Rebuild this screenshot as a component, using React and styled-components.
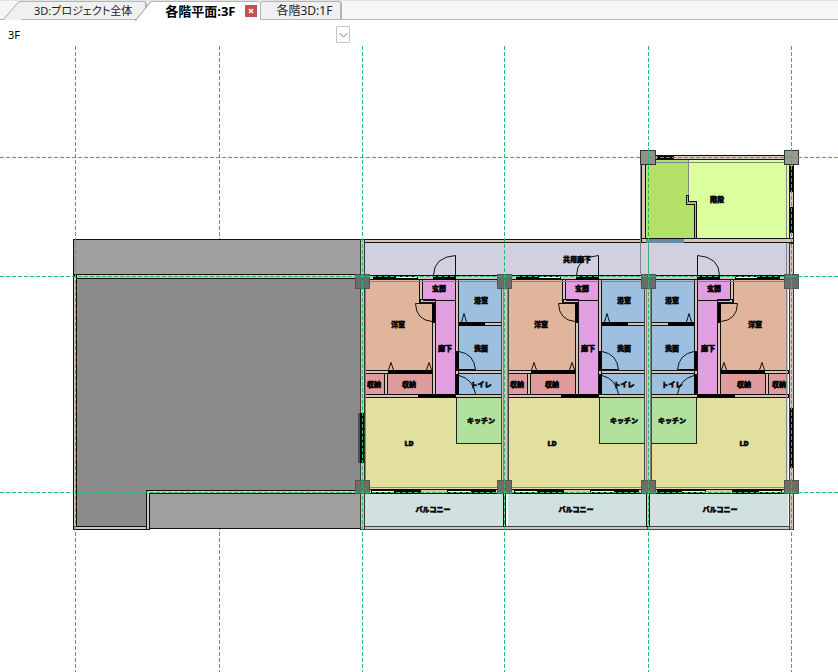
import React, { useState } from "react";
import styled, { createGlobalStyle } from "styled-components";

const GlobalStyle = createGlobalStyle`
  * {
    box-sizing: border-box;
  }
  body {
    margin: 0;
    background: #fff;
    font-family: "Noto Sans", "Noto Sans CJK JP", sans-serif;
    font-size: 12px;
    color: #000;
  }
`;

const Page = styled.div`
  display: flex;
  flex-direction: column;
  min-height: 100vh;
`;

const TabBar = styled.nav`
  display: flex;
  align-items: stretch;
  height: 20px;
  padding: 0 0 0 3px;
  background: #f6f6f6;
  border-bottom: 1px solid #b4b4b4;
  border-top: 1px solid #e2e2e2;
`;

const Tab = styled.div`
  display: flex;
  position: relative;
  margin-left: ${props => (props.$overlap ? "-12px" : "0")};
  margin-bottom: ${props => (props.$active ? "-1px" : "0")};
  z-index: ${props => (props.$active ? 1 : 0)};
`;

const TabSlant = styled.svg`
  display: block;
  flex: none;
`;

const TabBody = styled.div`
  display: flex;
  align-items: center;
  gap: 10px;
  padding: ${props => props.$pad || "0 8px 0 15px"};
  background: ${props => (props.$active ? "#fff" : "#f0f0f0")};
  border-top: 1px solid #b4b4b4;
  border-right: ${props => (props.$active ? "0" : "2px solid #b4b4b4")};
  border-left: ${props => (props.$slanted ? "0" : "1px solid #b4b4b4")};
  border-radius: ${props => (props.$slanted ? "0 3px 0 0" : "3px 3px 0 0")};
`;

const TabButton = styled.button`
  padding: 0;
  border: 0;
  background: transparent;
  font-family: inherit;
  font-size: ${props => props.$size || "12px"};
  font-weight: ${props => (props.$active ? 700 : 400)};
  font-feature-settings: "palt";
  line-height: 16px;
  color: ${props => (props.$active ? "#000" : "#222")};
  white-space: nowrap;
`;

const CloseButton = styled.button`
  display: flex;
  align-items: center;
  justify-content: center;
  width: 12px;
  height: 12px;
  padding: 0;
  border: 0;
  background: #c75050;
`;

const FloorBar = styled.div`
  padding: 6px 0 3px;
`;

const FloorField = styled.div`
  position: relative;
  width: 350px;
  height: 17px;
`;

const FloorSelect = styled.select`
  appearance: none;
  width: 100%;
  height: 17px;
  padding: 0 24px 0 8px;
  border: 0;
  background: transparent;
  font-family: inherit;
  font-size: 11px;
  line-height: 17px;
  color: #000;
`;

const FloorArrow = styled.span`
  position: absolute;
  top: 0;
  right: 0;
  display: flex;
  align-items: center;
  justify-content: center;
  width: 14px;
  height: 17px;
  border: 1px solid #c4c4c4;
  border-radius: 1px;
  background: #fff;
  pointer-events: none;
`;

const Canvas = styled.main`
  flex: 1;
`;

const Plan = styled.svg`
  display: block;
  width: 100%;
  height: auto;
`;

const Wall = styled.rect`
  fill: #d3c5ba;
  stroke: ${props => props.$edge || "#111"};
  stroke-width: 1px;
`;

const Opening = styled.rect`
  fill: #000;
`;

const Pane = styled.rect`
  fill: #fff;
`;

const Column = styled.rect`
  fill: ${props => props.$tone || "#6a6b6c"};
  stroke: ${props => props.$edge || "#555"};
  stroke-width: 1px;
`;

const Guide = styled.path`
  fill: none;
  stroke: #858585;
  stroke-width: 1px;
`;

const Swing = styled.path`
  fill: none;
  stroke: #111;
  stroke-width: 1px;
  shape-rendering: auto;
`;

const GridLine = styled.line`
  stroke: #1fc068;
  stroke-width: 1px;
  stroke-dasharray: 4 2;
`;

const RoomLabel = styled.text`
  font-size: 7px;
  font-weight: 900;
  text-anchor: middle;
  fill: #000;
  stroke: #000;
  stroke-width: 0.5px;
`;

const MIRROR = 1153;

const rooms = [
  { x: 365, y: 280, w: 68, h: 91, fill: "#e1b49c" },
  { x: 422, y: 280, w: 34, h: 21, fill: "#e19fe1" },
  { x: 435, y: 300, w: 21, h: 95, fill: "#e19fe1" },
  { x: 458, y: 280, w: 44, h: 43, fill: "#9dbfe0" },
  { x: 458, y: 326, w: 44, h: 45, fill: "#9dbfe0" },
  { x: 458, y: 374, w: 44, h: 21, fill: "#9dbfe0" },
  { x: 365, y: 374, w: 20, h: 21, fill: "#e09c9d" },
  { x: 388, y: 374, w: 45, h: 21, fill: "#e09c9d" },
  { x: 365, y: 398, w: 137, h: 91, fill: "#e1e19d" },
  { x: 365, y: 494, w: 140, h: 33, fill: "#d1e1e1" }
];

const labels = [
  { text: "玄関", x: 439, y: 291 },
  { text: "浴室", x: 481, y: 303 },
  { text: "洋室", x: 398, y: 327 },
  { text: "洗面", x: 481, y: 351 },
  { text: "廊下", x: 445, y: 351 },
  { text: "収納", x: 374, y: 387 },
  { text: "収納", x: 409, y: 387 },
  { text: "トイレ", x: 481, y: 387 },
  { text: "キッチン", x: 481, y: 423 },
  { text: "LD", x: 409, y: 446 },
  { text: "バルコニー", x: 433, y: 512 }
];

const units = [
  { id: "a", transform: undefined, place: x => x },
  { id: "b", transform: "translate(143 0)", place: x => x + 143 },
  {
    id: "c",
    transform: `translate(${MIRROR} 0) scale(-1 1)`,
    place: x => MIRROR - x
  }
];

function SlantedEdge({ active }) {
  return (
    <TabSlant width="18" height={active ? 20 : 19} viewBox="0 0 18 19" preserveAspectRatio="none" aria-hidden="true">
      <path d="M0 19L15 1.5Q16 .5 18 .5V19Z" fill={active ? "#fff" : "#f0f0f0"} />
      <path d="M0 19L15 1.5Q16 .5 18 .5" fill="none" stroke="#a8a8a8" />
    </TabSlant>
  );
}

function Unit({ transform }) {
  return (
    <g transform={transform}>
      {rooms.map((room, i) => (
        <rect key={i} x={room.x} y={room.y} width={room.w} height={room.h} fill={room.fill} />
      ))}
      <rect x="456.5" y="397.5" width="45" height="46" fill="#b1e19d" stroke="#222" />

      <Wall x="361.5" y="275.5" width="143" height="4" />
      <Wall x="419.5" y="279.5" width="3" height="23" />
      <Wall x="420.5" y="299.5" width="15" height="3" />
      <Wall x="432.5" y="302.5" width="3" height="92" />
      <Wall x="455.5" y="279.5" width="3" height="115" />
      <Wall x="458.5" y="322.5" width="44" height="3" />
      <Wall x="458.5" y="370.5" width="44" height="3" />
      <Wall x="364.5" y="370.5" width="68" height="3" />
      <Wall x="384.5" y="373.5" width="3" height="21" />
      <Wall x="364.5" y="394.5" width="138" height="3" />
      <Wall x="364.5" y="489.5" width="138" height="4" />
      <Wall x="361.5" y="526.5" width="144" height="3" $edge="#444" />
      <Swing d="M423 300.5H456" />

      <Opening x="373" y="275" width="45" height="4" />
      <Pane x="396" y="277" width="21" height="1" />
      <Opening x="433" y="275" width="23" height="5" />
      <Opening x="432" y="303" width="3" height="20" />
      <Opening x="459" y="322" width="26" height="4" />
      <Opening x="456" y="351" width="3" height="20" />
      <Opening x="456" y="374" width="3" height="21" />
      <Opening x="388" y="370" width="44" height="4" />
      <Opening x="418" y="394" width="38" height="4" />
      <Opening x="371" y="489" width="50" height="5" />
      <Pane x="372" y="491" width="22" height="1" />
      <Opening x="447" y="489" width="49" height="5" />
      <Pane x="448" y="491" width="23" height="1" />

      <Swing d="M455.5 275V255.5Q434 257 433.5 275" />
      <Swing d="M432 303.5H415.5Q416 320 432 321.5" />
      <Swing d="M459 351.5Q474 354 475.5 369.5H459" />
      <Swing d="M459 375.5Q473 379 475.5 394" />
      <Swing d="M388.5 370L391 362.5L393.5 370M426.5 370L429 362.5L431.5 370M461.5 322L464 313.5L466.5 322" />
    </g>
  );
}

function LeftWing() {
  return (
    <g>
      <rect x="73.5" y="239.5" width="287" height="35" fill="#9f9f9f" stroke="#111" />
      <path d="M75 277H361V492H148V528H75Z" fill="#8b8b8b" />
      <rect x="149" y="494" width="212" height="35" fill="#9f9f9f" />
      <Swing d="M149 528.5H361" />
      <Wall x="73.5" y="274.5" width="288" height="4" />
      <Wall x="73.5" y="275.5" width="3" height="254" />
      <Wall x="73.5" y="526.5" width="76" height="3" />
      <Wall x="146.5" y="490.5" width="3" height="39" />
      <Wall x="146.5" y="490.5" width="215" height="3" />
      {/* inner corner of the L-shaped wall */}
      <rect x="147" y="491" width="2" height="4" fill="#d3c5ba" />
    </g>
  );
}

function Stairwell() {
  return (
    <g>
      <rect x="645" y="159" width="145" height="80" fill="#dbff9c" />
      <path d="M645 159H689V201H695V239H645Z" fill="#b3e069" />
      <Wall x="641.5" y="155.5" width="152" height="4" />
      <Wall x="641.5" y="159.5" width="4" height="83" />
      <Wall x="789.5" y="155.5" width="4" height="87" />
      <Wall x="641.5" y="238.5" width="152" height="4" />
      <rect x="646" y="239" width="38" height="4" fill="#668ba6" />
      <path d="M686.5 195.5H688.5V201.5H696.5V238.5H694.5V204.5H686.5Z" fill="#b9b58f" stroke="#111" />
      <Guide d="M688.5 160V195" stroke="#8fb65a" />
      <Opening x="657" y="156" width="17" height="3" />
      <Opening x="790" y="166" width="3" height="26" />
      <Opening x="790" y="207" width="3" height="26" />
      <Guide d="M645 162.5H787M786.5 162V238M640.5 164V243" />
    </g>
  );
}

function FloorPlan() {
  const columnXs = [355, 497, 641, 784];

  return (
    <Plan viewBox="0 46 838 626" shapeRendering="crispEdges" role="img" aria-label="3F">
      {/* this grid line runs behind the wing */}
      <GridLine x1="219.5" x2="219.5" y1="46" y2="672" />
      <LeftWing />
      <rect x="362" y="240" width="430" height="36" fill="#d1d0e1" />
      <Wall x="361.5" y="239.5" width="284" height="3" />
      <Stairwell />

      {units.map(unit => (
        <Unit key={unit.id} transform={unit.transform} />
      ))}

      {/* party walls */}
      <Wall x="360.5" y="239.5" width="4" height="290" $edge="#333" />
      <Wall x="501.5" y="279.5" width="7" height="214" $edge="#444" />
      <Wall x="503.5" y="493.5" width="2" height="33" />
      <Wall x="644.5" y="279.5" width="7" height="214" $edge="#444" />
      <Wall x="646.5" y="493.5" width="3" height="33" />
      <Wall x="789.5" y="243.5" width="4" height="286" $edge="#333" />
      <rect x="358" y="413" width="6" height="50" fill="#46545d" />
      <Opening x="360" y="413" width="4" height="50" />
      <Opening x="790" y="408" width="3" height="60" />

      <Guide d="M369 281.5H497M512 281.5H641M656 281.5H784M369 487.5H497M512 487.5H641M656 487.5H784" />
      <Guide d="M640.5 243V274M648.5 243V274M786.5 243V480M365.5 289V480" />
      <Guide d="M503.5 289V480M507.5 289V480M646.5 289V480M650.5 289V480" />

      {columnXs.map(x => (
        <React.Fragment key={x}>
          <Column x={x + 0.5} y="274.5" width="14" height="14" />
          <Column x={x + 0.5} y="480.5" width="14" height="13" $tone="#6f6e62" />
        </React.Fragment>
      ))}
      <Column x="640.5" y="150.5" width="15" height="14" $tone="#8f918c" $edge="#333" />
      <Column x="784.5" y="150.5" width="14" height="14" $tone="#989a94" $edge="#333" />

      {[75.5, 362.5, 504.5, 648.5, 791.5].map(x => (
        <GridLine key={x} x1={x} x2={x} y1="46" y2="672" />
      ))}
      {[157.5, 276.5, 492.5].map(y => (
        <GridLine key={y} x1="0" x2="838" y1={y} y2={y} />
      ))}

      {units.map(unit =>
        labels.map((label, i) => (
          <RoomLabel key={unit.id + i} x={unit.place(label.x)} y={label.y}>
            {label.text}
          </RoomLabel>
        ))
      )}
      <RoomLabel x="577" y="262">共用廊下</RoomLabel>
      <RoomLabel x="717" y="202">階段</RoomLabel>
    </Plan>
  );
}

export default function App() {
  const [floor, setFloor] = useState("3F");

  return (
    <Page>
      <GlobalStyle />
      <TabBar>
        <Tab>
          <SlantedEdge />
          <TabBody $slanted $pad="0 13px">
            <TabButton type="button" $size="11px">3D:プロジェクト全体</TabButton>
          </TabBody>
        </Tab>
        <Tab $active $overlap>
          <SlantedEdge active />
          <TabBody $slanted $active $pad="0 3px 0 12px">
            <TabButton type="button" $active $size="13px">各階平面:3F</TabButton>
            <CloseButton type="button" aria-label="閉じる">
              <svg width="6" height="6" viewBox="0 0 6 6" aria-hidden="true">
                <path d="M1 1L5 5M5 1L1 5" stroke="#fff" strokeWidth="1.5" />
              </svg>
            </CloseButton>
          </TabBody>
        </Tab>
        <Tab>
          <TabBody>
            <TabButton type="button">各階3D:1F</TabButton>
          </TabBody>
        </Tab>
      </TabBar>
      <FloorBar>
        <FloorField>
          <FloorSelect aria-label="階" value={floor} onChange={e => setFloor(e.target.value)}>
            <option>1F</option>
            <option>2F</option>
            <option>3F</option>
          </FloorSelect>
          <FloorArrow>
            <svg width="9" height="6" viewBox="0 0 9 6" aria-hidden="true">
              <path d="M.5 1L4.5 5L8.5 1" fill="none" stroke="#777" />
            </svg>
          </FloorArrow>
        </FloorField>
      </FloorBar>
      <Canvas>
        <FloorPlan />
      </Canvas>
    </Page>
  );
}
